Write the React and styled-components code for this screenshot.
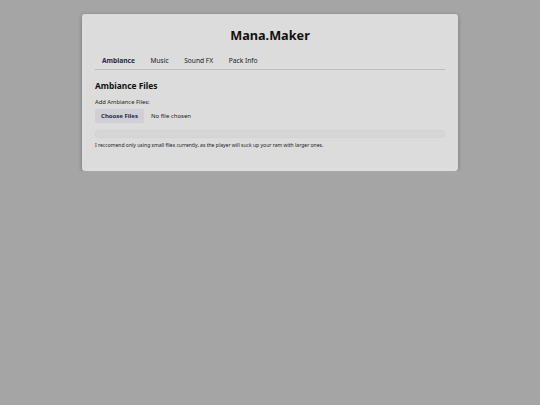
import React, { useState } from 'react';
import styled, { createGlobalStyle } from 'styled-components';

const GlobalStyle = createGlobalStyle`
  html, body {
    margin: 0;
    padding: 0;
    background: #a5a5a5;
    font-family: "Noto Sans", "Open Sans", sans-serif;
  }
`;

const tabs = ['Ambiance', 'Music', 'Sound FX', 'Pack Info'];

const App = () => {
  const [active, setActive] = useState('Ambiance');
  return (
    <>
      <GlobalStyle />
      <Card>
        <Title>Mana.Maker</Title>
        <TabBar>
          {tabs.map((t) => (
            <Tab key={t} active={t === active} onClick={() => setActive(t)}>
              {t}
            </Tab>
          ))}
        </TabBar>
        <Section>
          <Heading>Ambiance Files</Heading>
          <Label>Add Ambiance Files:</Label>
          <FileRow>
            <ChooseButton>Choose Files</ChooseButton>
            <FileStatus>No file chosen</FileStatus>
          </FileRow>
          <Progress />
          <Note>
            I reccomend only using small files currently, as the player will suck up your ram with larger ones.
          </Note>
        </Section>
      </Card>
    </>
  );
};

export default App;

const Card = styled.div`
  width: 350px;
  margin: 14px auto 0;
  padding: 11px 13px 22px;
  background: #dcdcdc;
  border-radius: 3px;
  box-shadow: 0 1px 4px rgba(0, 0, 0, 0.28);
`;

const Title = styled.h1`
  margin: 0;
  text-align: center;
  font-size: 12.7px;
  line-height: 20px;
  font-weight: 700;
  color: #111;
`;

const TabBar = styled.div`
  display: flex;
  margin-top: 10px;
  padding: 0 0 2px 7px;
  border-bottom: 1px solid #bcbcbc;
`;

const Tab = styled.button`
  background: none;
  border: none;
  padding: 0;
  margin-right: 15.5px;
  font-family: inherit;
  font-size: 6.65px;
  line-height: 12px;
  cursor: pointer;
  font-weight: ${({ active }) => (active ? 700 : 400)};
  color: ${({ active }) => (active ? '#28284a' : '#222')};
`;

const Section = styled.div`
  padding-top: 9px;
`;

const Heading = styled.h2`
  margin: 0;
  font-size: 8.4px;
  line-height: 14px;
  font-weight: 700;
  color: #111;
`;

const Label = styled.div`
  margin-top: 4.5px;
  font-size: 5.8px;
  line-height: 9px;
  color: #222;
`;

const FileRow = styled.div`
  display: flex;
  align-items: center;
  gap: 7px;
  margin-top: 2.5px;
`;

const ChooseButton = styled.button`
  width: 49px;
  height: 14px;
  padding: 0;
  border: none;
  border-radius: 2px;
  background: #cfcfd5;
  font-family: inherit;
  font-size: 6px;
  font-weight: 700;
  color: #28284a;
`;

const FileStatus = styled.span`
  font-size: 6px;
  color: #222;
`;

const Progress = styled.div`
  margin-top: 7px;
  height: 6px;
  border: 1px solid #d2d2d2;
  border-radius: 3px;
  background: #d6d6d6;
`;

const Note = styled.p`
  margin: 3px 0 0;
  font-size: 5.05px;
  line-height: 8px;
  color: #222;
`;
